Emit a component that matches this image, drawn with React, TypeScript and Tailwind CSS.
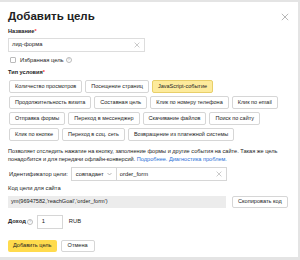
import React from "react";

const types: string[][] = [
  ["Количество просмотров", "Посещение страниц", "JavaScript-событие"],
  ["Продолжительность визита", "Составная цель", "Клик по номеру телефона", "Клик по email"],
  ["Отправка формы", "Переход в мессенджер", "Скачивание файлов", "Поиск по сайту"],
  ["Клик по кнопке", "Переход в соц. сеть", "Возвращение из платежной системы"],
];

function Q() {
  return (
    <span className="inline-flex h-[6px] w-[6px] shrink-0 items-center justify-center rounded-full border border-[#bbb] text-[4px] leading-none text-[#aaa]">
      ?
    </span>
  );
}

function X({ size = 6 }: { size?: number }) {
  return (
    <svg width={size} height={size} viewBox="0 0 10 10" stroke="#b5b5b5" strokeWidth="1.2">
      <path d="M1 1L9 9M9 1L1 9" />
    </svg>
  );
}

export default function App() {
  return (
    <div className="h-[260px] w-[300px] whitespace-nowrap bg-[#e4e4e4] pt-[2px] font-['Liberation_Sans',Arial,sans-serif] text-[#222]">
      <div className="flex h-[255px] w-[298px] flex-col bg-white pl-[8px] pr-[10px]">
        <div className="mt-[8px] flex h-[14px] items-center justify-between">
          <span className="text-[11.5px] font-bold leading-none">Добавить цель</span>
          <span className="mr-[-1px]">
            <X size={8} />
          </span>
        </div>
        <div className="mt-[5px] text-[5.6px] font-bold leading-none">
          Название<span className="text-[#f33]">*</span>
        </div>
        <div className="mt-[3px] flex h-[14px] w-[137px] items-center justify-between border border-[#ddd] pl-[3px] pr-[4px] text-[5.8px]">
          <span>лид-форма</span>
          <X />
        </div>
        <div className="mt-[4px] flex items-center gap-[2px] text-[5.8px]">
          <span className="ml-[2px] h-[6px] w-[6px] rounded-[1px] border border-[#bbb]" />
          <span className="ml-[2px]">Избранная цель</span>
          <Q />
        </div>
        <div className="mt-[6px] text-[5.6px] font-bold leading-none">
          Тип условия<span className="text-[#f33]">*</span>
        </div>
        <div className="mt-[4px] flex flex-col gap-[3px] pl-[1px]">
          {types.map((row, i) => (
            <div key={i} className="flex gap-[3px]">
              {row.map((t) => (
                <span
                  key={t}
                  className={
                    "flex h-[13px] shrink-0 items-center rounded-[2px] border px-[5px] text-[5.5px] leading-none " +
                    (t === "JavaScript-событие"
                      ? "border-[#e8cf6a] bg-[#fdeb9c]"
                      : "border-[#d6d6d6] bg-white")
                  }
                >
                  {t}
                </span>
              ))}
            </div>
          ))}
        </div>
        <div className="mt-[6px] whitespace-normal text-[5.6px] leading-[8px]">
          <div>Позволяет отследить нажатие на кнопку, заполнение формы и другие события на сайте. Такая же цель</div>
          <div>
            понадобится и для передачи офлайн-конверсий.{" "}
            <span className="text-[#2a6fd6]">Подробнее. Диагностика проблем.</span>
          </div>
        </div>
        <div className="mt-[4px] flex h-[14px] items-center text-[5.8px]">
          <span className="mr-[3px] shrink-0 pl-[1px]">Идентификатор цели:</span>
          <span className="flex h-full shrink-0 items-center gap-[3px] border border-[#d6d6d6] px-[4px]">
            совпадает
            <svg width="5" height="4" viewBox="0 0 10 6" fill="none" stroke="#888" strokeWidth="1.2">
              <path d="M1 1l4 4 4-4" />
            </svg>
          </span>
          <span className="flex h-full w-[110px] shrink-0 items-center justify-between border border-l-0 border-[#d6d6d6] pl-[3px] pr-[4px]">
            order_form
            <X />
          </span>
        </div>
        <div className="mt-[5px] text-[5.8px] leading-none">Код цели для сайта</div>
        <div className="mt-[4px] flex items-center gap-[6px]">
          <div className="flex h-[12px] w-[218px] shrink-0 items-center bg-[#ececec] pl-[3px] text-[5.6px]">
            ym(96947582,'reachGoal','order_form')
          </div>
          <span className="flex h-[12px] shrink-0 items-center rounded-[2px] border border-[#d6d6d6] px-[5px] text-[5.6px]">
            Скопировать код
          </span>
        </div>
        <div className="mt-[7px] flex items-center text-[5.8px]">
          <span className="font-bold">Доход</span>
          <span className="ml-[1px]">
            <Q />
          </span>
          <span className="ml-[4px] flex h-[14px] w-[26px] items-center border border-[#d6d6d6] pl-[4px]">1</span>
          <span className="ml-[6px]">RUB</span>
        </div>
        <div className="mt-[11px] flex gap-[4px]">
          <span className="flex h-[12px] items-center rounded-[2px] bg-[#ffdb4d] px-[5px] text-[5.6px]">
            Добавить цель
          </span>
          <span className="flex h-[12px] items-center rounded-[2px] border border-[#d6d6d6] px-[6px] text-[5.6px]">
            Отмена
          </span>
        </div>
      </div>
    </div>
  );
}
